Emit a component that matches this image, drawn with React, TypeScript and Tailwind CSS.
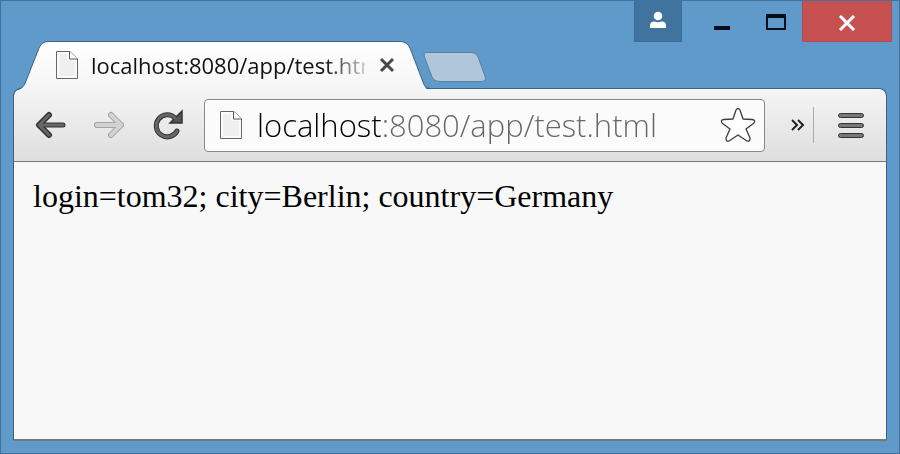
function PageIcon() {
  return (
    <svg width="24" height="30" viewBox="0 0 24 30" fill="none" aria-hidden="true" className="shrink-0">
      <path d="M1.5 1.5H15L22.5 9V28.5H1.5Z" fill="#fafafa" stroke="#666" />
      <path d="M4 4H12V11H20V26H4Z" fill="#efefef" />
      <path d="M14.5 1.5V9H22.5" fill="#fff" stroke="#555" />
    </svg>
  );
}

function WindowControls() {
  return (
    <div className="flex h-10 shrink-0 items-start justify-end pr-[7px]">
      <button aria-label="User profile" className="flex h-[41px] w-12 items-start justify-center border border-t-0 border-[#3a6c9c] bg-[#41739f] pt-[10px]">
        <svg width="18" height="18" viewBox="0 0 18 18" fill="#fff" aria-hidden="true">
          <circle cx="9" cy="5" r="4.3" />
          <path d="M1 17V14.5Q1 10.5 5.5 10.5Q9 12 12.5 10.5Q17 10.5 17 14.5V17Z" />
        </svg>
      </button>
      <button aria-label="Minimize" className="flex h-10 w-20 items-start justify-center pt-[25px]">
        <span className="h-1 w-4 bg-[#07101a]" />
      </button>
      <button aria-label="Maximize" className="flex h-10 w-7 items-start justify-center pt-[13px]">
        <span className="h-4 w-5 border-2 border-t-4 border-[#07101a]" />
      </button>
      <button aria-label="Close window" className="ml-3 flex h-[41px] w-[90px] items-center justify-center rounded-b-xs border border-t-0 border-[#b04a55] bg-[#c75050]">
        <svg width="18" height="16" viewBox="0 0 18 16" stroke="#fff" strokeWidth="3" aria-hidden="true" className="mt-1">
          <path d="M2 1L16 15M16 1L2 15" />
        </svg>
      </button>
    </div>
  );
}

function TabStrip() {
  return (
    <div className="flex h-12 shrink-0 items-end pl-3">
      <div className="relative h-12 w-[417px] shrink-0">
        <svg width="417" height="49" viewBox="0 0 417 49" aria-hidden="true" className="absolute top-0 left-0 z-10">
          <defs>
            <linearGradient id="tab-fill" x1="0" y1="0" x2="0" y2="1">
              <stop offset="0" stopColor="#fff" />
              <stop offset="1" stopColor="#f5f5f5" />
            </linearGradient>
          </defs>
          <path d="M5 49Q11 47 13 40L26 7Q29 .5 35 .5H387Q394 .5 397 7L410 41Q412 47.5 415 49Z" fill="url(#tab-fill)" />
          <path d="M5 48.5Q11 47 13 40L26 7Q29 .5 35 .5H387Q394 .5 397 7L410 41Q412 47.5 417 47.5" fill="none" stroke="#3e617f" />
        </svg>
        <div className="relative z-20 flex h-full items-center pl-[42px]">
          <PageIcon />
          <span className="ml-3 w-[274px] overflow-hidden whitespace-nowrap bg-linear-to-r from-[#111] from-85% to-[#111]/20 bg-clip-text text-[22px] leading-8 text-transparent">
            localhost:8080/app/test.html
          </span>
          <button aria-label="Close tab" className="ml-[14px] p-0">
            <svg width="16" height="16" viewBox="0 0 16 16" stroke="#484848" strokeWidth="3" aria-hidden="true">
              <path d="M2 2L14 14M14 2L2 14" />
            </svg>
          </button>
        </div>
      </div>
      <button aria-label="New tab" className="mb-[6px] -ml-2">
        <svg width="64" height="32" viewBox="0 0 64 32" aria-hidden="true">
          <path d="M5 1.5H49Q54 1.5 56 6L63 25Q65 30.5 59 30.5H18Q12 30.5 10 26L2.5 6Q1 1.5 5 1.5Z" fill="#b0c6da" stroke="#5c7f9e" />
        </svg>
      </button>
    </div>
  );
}

function Toolbar() {
  return (
    <div className="flex h-[74px] shrink-0 items-center rounded-t-lg border border-[#3e617f] border-b-[#777] bg-linear-to-b from-[#f5f5f5] to-[#dedede] pr-[22px] pl-5">
      <button aria-label="Back" className="shrink-0">
        <svg width="32" height="28" viewBox="0 0 32 28" fill="none" strokeLinecap="round" strokeLinejoin="round" aria-hidden="true">
          <path d="M29 14H5" stroke="#333" strokeWidth="5" />
          <path d="M15 4L5 14L15 24" stroke="#333" strokeWidth="6" />
          <path d="M29 14H5M15 4L5 14L15 24" stroke="#666" strokeWidth="3" />
        </svg>
      </button>
      <button aria-label="Forward" className="ml-7 shrink-0">
        <svg width="32" height="28" viewBox="0 0 32 28" fill="none" strokeLinecap="round" strokeLinejoin="round" aria-hidden="true">
          <path d="M3 14H27M17 4L27 14L17 24" stroke="#a3a3a3" strokeWidth="6" />
          <path d="M3 14H27M17 4L27 14L17 24" stroke="#d2d2d2" strokeWidth="4" />
        </svg>
      </button>
      <button aria-label="Reload" className="ml-[26px] shrink-0">
        <svg width="32" height="32" viewBox="0 0 32 32" fill="none" aria-hidden="true">
          <path d="M23 9A11 11 0 1 0 25 22" stroke="#333" strokeWidth="5" strokeLinecap="round" />
          <path d="M30 2V14H18Z" fill="#555" stroke="#333" strokeWidth="1.5" />
          <path d="M23 9A11 11 0 1 0 25 22" stroke="#666" strokeWidth="3" strokeLinecap="round" />
        </svg>
      </button>
      <div className="ml-5 flex h-[53px] min-w-0 flex-1 items-center rounded-sm border border-[#888] bg-[#fbfbfb] pr-2 pl-[14px]">
        <PageIcon />
        <input
          aria-label="Address"
          defaultValue="localhost:8080/app/test.html"
          className="ml-[14px] min-w-0 flex-1 bg-linear-to-r from-[#000] from-[126px] to-[#666] to-[126px] bg-clip-text text-[31px] leading-10 font-light text-transparent outline-none"
        />
        <button aria-label="Bookmark this page" className="shrink-0">
          <svg width="36" height="36" viewBox="0 0 36 36" fill="#fff" stroke="#3d3d3d" strokeWidth="1.3" strokeLinejoin="round" aria-hidden="true">
            <path d="M16 3Q18 0 20 3L23 12L32 12.5Q36 13 34 16L26 22L30 31Q30 35 27 34L18 28L9 34Q6 35 6 31L10 22L2 16Q0 13 4 12.5L13 12Z" />
          </svg>
        </button>
      </div>
      <button aria-label="More extensions" className="ml-[26px] shrink-0">
        <svg width="14" height="12" viewBox="0 0 14 12" fill="none" stroke="#222" strokeWidth="2" aria-hidden="true">
          <path d="M1 1L6 6L1 11M7 1L12 6L7 11" />
        </svg>
      </button>
      <span className="ml-2 h-9 w-px shrink-0 bg-[#aaa]" />
      <button aria-label="Menu" className="ml-6 flex shrink-0 flex-col gap-[5px]">
        <span className="h-[5px] w-[26px] rounded-full border border-[#333] bg-[#777]" />
        <span className="h-[5px] w-[26px] rounded-full border border-[#333] bg-[#777]" />
        <span className="h-[5px] w-[26px] rounded-full border border-[#333] bg-[#777]" />
      </button>
    </div>
  );
}

export default function App() {
  return (
    <div className="flex h-screen flex-col border border-[#41729b] bg-[#5f9aca] font-['Open_Sans','Noto_Sans',sans-serif]">
      <WindowControls />
      <TabStrip />
      <div className="mx-3 -mt-px mb-3 flex min-h-0 flex-1 flex-col">
        <Toolbar />
        <main className="flex-1 border-x border-b-2 border-x-[#3e617f] border-b-[#777] bg-[#f8f8f8] px-[19px] pt-3 font-['Liberation_Serif',serif] text-[32px] leading-11 text-black">
          login=tom32; city=Berlin; country=Germany
        </main>
      </div>
    </div>
  );
}
